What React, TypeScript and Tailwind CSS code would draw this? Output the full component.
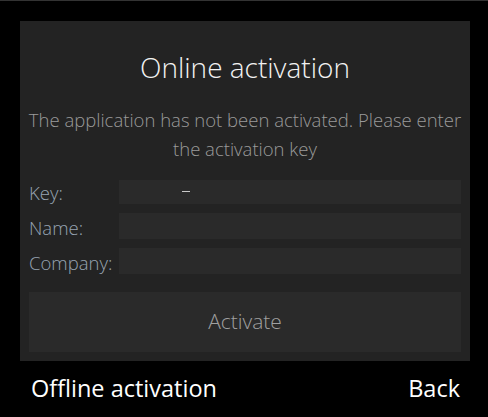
import React from 'react';

const font = { fontFamily: '"Open Sans", "Noto Sans", sans-serif' };

function Field({ label, tall, children }: { label: string; tall?: boolean; children?: React.ReactNode }) {
  return (
    <div className="flex items-end">
      <div className="w-[90px] text-[18.5px] font-light leading-[22px] text-[#97a3b2]">{label}</div>
      <div className={`relative flex-1 bg-[#2a2a2a] ${tall ? 'h-[26px]' : 'h-[24px]'}`}>{children}</div>
    </div>
  );
}

export default function App() {
  return (
    <div className="w-[488px] h-[417px] bg-black border-t border-[#333333] flex flex-col" style={font}>
      <div className="ml-[20px] mt-[20px] w-[450px] h-[340px] bg-[#232323] px-[9px] flex flex-col">
        <div className="mt-[28px] text-center text-[28px] font-light leading-[36px] text-[#f2f2f2]">
          Online activation
        </div>
        <div className="-mx-[9px] mt-[20px] whitespace-nowrap text-center text-[18.5px] font-light leading-[29px] text-[#9a9a9a]">
          The application has not been activated. Please enter
          <br />
          the activation key
        </div>
        <div className="mt-[17px] flex flex-col gap-[9px]">
          <Field label="Key:">
            <div className="absolute left-[63px] top-[11px] w-[8px] h-[1px] bg-[#c8c8c8]" />
          </Field>
          <Field label="Name:" tall />
          <Field label="Company:" tall />
        </div>
        <button className="mt-[18px] h-[60px] w-full bg-[#2a2a2a] text-[21px] font-light text-[#a0a0a0]">
          Activate
        </button>
      </div>
      <div className="flex-1 flex items-center justify-between pl-[31px] pr-[28px] text-[23.5px] text-white">
        <span>Offline activation</span>
        <span>Back</span>
      </div>
    </div>
  );
}
